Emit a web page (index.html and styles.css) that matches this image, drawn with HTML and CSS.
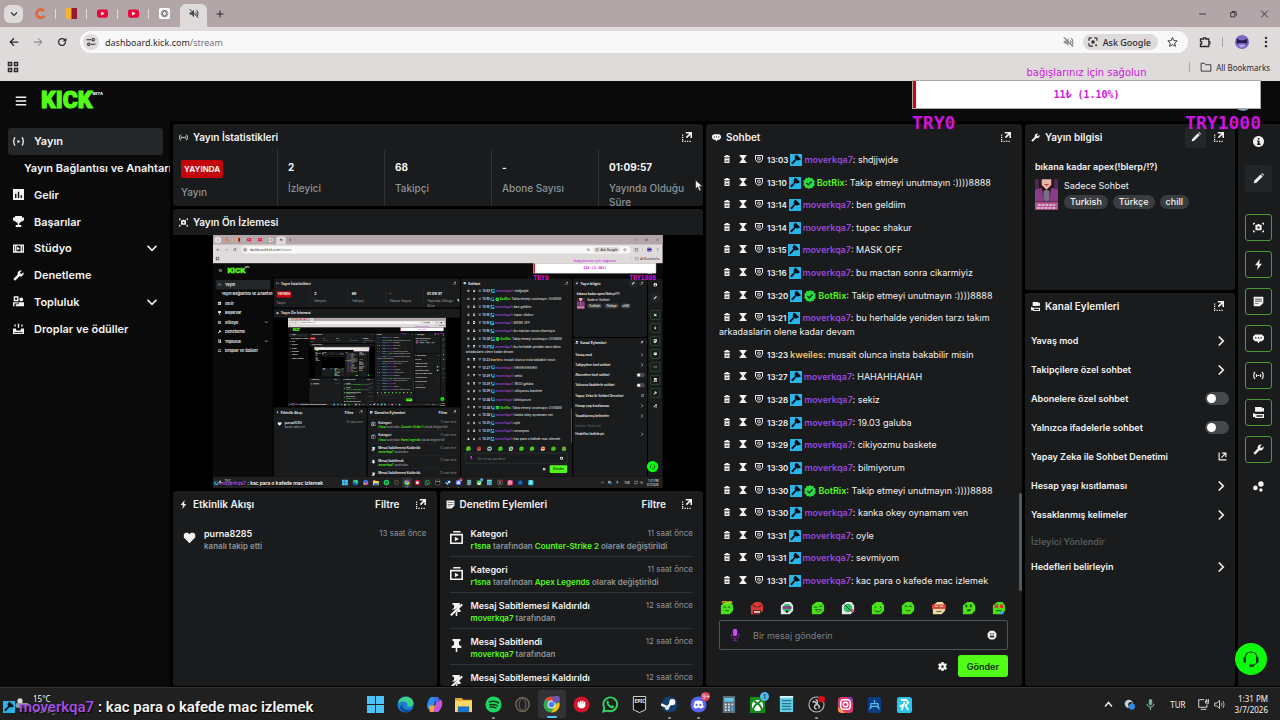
FILE: index.html
```html
<!DOCTYPE html>
<html lang="tr">
<head>
  <meta charset="UTF-8">
  <meta name="viewport" content="width=device-width, initial-scale=1.0">
  <title>Kick - Yayın</title>
  <link rel="stylesheet" href="styles.css">
</head>
<body>
  <svg class="sprite" aria-hidden="true">
    <symbol id="i-down" viewBox="0 0 16 16"><path d="M2 5l6 6 6-6" fill="none" stroke="currentColor" stroke-width="2.200"/></symbol>
    <symbol id="i-right" viewBox="0 0 16 16"><path d="M5 2l6 6-6 6" fill="none" stroke="currentColor" stroke-width="2.200"/></symbol>
    <symbol id="i-back" viewBox="0 0 16 16"><path d="M15 8H2M8 2L2 8l6 6" fill="none" stroke="currentColor" stroke-width="2"/></symbol>
    <symbol id="i-forward" viewBox="0 0 16 16"><path d="M1 8h13M8 2l6 6-6 6" fill="none" stroke="currentColor" stroke-width="1.500"/></symbol>
    <symbol id="i-reload" viewBox="0 0 16 16"><path d="M13.500 8a5.500 5.500 0 1 1-1.600-3.900L14 6" fill="none" stroke="currentColor" stroke-width="2"/><path d="M15 1v6H9z"/></symbol>
    <symbol id="i-tune" viewBox="0 0 16 16"><g fill="none" stroke="currentColor" stroke-width="1.700"><path d="M1 4.500h7M8 11.500h7"/><circle cx="11.500" cy="4.500" r="2"/><circle cx="4.500" cy="11.500" r="2"/></g></symbol>
    <symbol id="i-muted" viewBox="0 0 16 16"><path d="M1 6h3l4-4v12l-4-4H1z" opacity=".8"/><path d="M1 1l14 14M10.500 5.500c1.500 1.500 1.500 3.500 0 5M12 2.500c3 2.500 3 7.500 1 10" fill="none" stroke="currentColor" stroke-width="1.500"/></symbol>
    <symbol id="i-plus" viewBox="0 0 16 16"><path d="M8 1v14M1 8h14" fill="none" stroke="currentColor" stroke-width="2.200"/></symbol>
    <symbol id="i-lens" viewBox="0 0 16 16"><path d="M1.500 6V3.500a2 2 0 0 1 2-2H6M10 1.500h2.500a2 2 0 0 1 2 2V6M1.500 10v2.500a2 2 0 0 0 2 2H8" fill="none" stroke="currentColor" stroke-width="2"/><circle cx="8" cy="8" r="2.700"/><circle cx="13" cy="13" r="1.600"/></symbol>
    <symbol id="i-star" viewBox="0 0 16 16"><path d="M8 1.500l2 4.500 4.800.4-3.600 3.200 1.100 4.700L8 11.800l-4.300 2.500 1.100-4.700L1.200 6.400 6 6z" fill="none" stroke="currentColor" stroke-width="1.300"/></symbol>
    <symbol id="i-ext" viewBox="0 0 16 16"><path d="M2 4h4V2.500h3V4h4v4h1.500v2.500H13V14H2v-3.500h1.500v-3H2z" fill="none" stroke="currentColor" stroke-width="1.700"/></symbol>
    <symbol id="i-dots" viewBox="0 0 16 16"><circle cx="8" cy="2.500" r="1.600"/><circle cx="8" cy="8" r="1.600"/><circle cx="8" cy="13.500" r="1.600"/></symbol>
    <symbol id="i-apps" viewBox="0 0 16 16"><path d="M2 2h4v4H2zM10 2h4v4h-4zM2 10h4v4H2zM10 10h4v4h-4z" fill="none" stroke="currentColor" stroke-width="2"/></symbol>
    <symbol id="i-folder" viewBox="0 0 16 16"><path d="M1.500 3h4.500l1.500 2h7v8.500h-13z" fill="none" stroke="currentColor" stroke-width="1.200"/></symbol>
    <symbol id="i-min" viewBox="0 0 16 16"><path d="M2 8h12" stroke="currentColor" stroke-width="1.500"/></symbol>
    <symbol id="i-max" viewBox="0 0 16 16"><path d="M5 3.500h6.500a1.500 1.500 0 0 1 1.500 1.500v6M3 5.500h7.500V13H3z" fill="none" stroke="currentColor" stroke-width="1.500"/></symbol>
    <symbol id="i-close" viewBox="0 0 16 16"><path d="M2 2l12 12M14 2L2 14" stroke="currentColor" stroke-width="1.600"/></symbol>
    <symbol id="i-menu" viewBox="0 0 16 16"><path d="M1 3h14M1 8h14M1 13h14" stroke="currentColor" stroke-width="1.800"/></symbol>
    <symbol id="i-live" viewBox="0 0 16 16"><path d="M3 2C.5 4 .5 12 3 14M13 2c2.500 2 2.500 10 0 12" fill="none" stroke="currentColor" stroke-width="1.900"/><path d="M6.500 5.500l4 2.500-4 2.500z"/></symbol>
    <symbol id="i-signal" viewBox="0 0 16 16"><path d="M3 3C.5 5 .5 11 3 13M5 6v4M13 3c2.500 2 2.500 8 0 10M11 6v4M6.500 8h3" fill="none" stroke="currentColor" stroke-width="1.700"/></symbol>
    <symbol id="i-bars" viewBox="0 0 16 16"><path fill-rule="evenodd" d="M0 0h16v16H0zM3 7v6h2V7zM7 4v9h2V4zM11 9v4h2V9z"/></symbol>
    <symbol id="i-cup" viewBox="0 0 16 16"><path d="M3 0h10v2h3v4l-3 2h-1l-3 3v2h3v3H4v-3h3v-2L4 8H3L0 6V2h3z"/></symbol>
    <symbol id="i-studio" viewBox="0 0 16 16"><path fill-rule="evenodd" d="M0 2h16v12H0zM2 4v8h1V4zM5 4v8h6V4zM13 4v8h1V4z"/><path d="M6 5l4 3-4 3z"/></symbol>
    <symbol id="i-wrench" viewBox="0 0 24 24"><path transform="matrix(-1 0 0 1 24 0)" d="M22.700 19l-9.100-9.100c.9-2.300.4-5-1.500-6.900-2-2-5-2.400-7.400-1.300L9 6 6 9 1.600 4.700C.4 7.100.9 10.100 2.900 12.100c1.900 1.900 4.600 2.400 6.900 1.500l9.100 9.100c.4.4 1 .4 1.400 0l2.300-2.300c.5-.4.5-1.100.1-1.400z"/></symbol>
    <symbol id="i-people" viewBox="0 0 16 16"><path d="M2 1.500h5v5H2zM1 15v-5h6" fill="none" stroke="currentColor" stroke-width="2"/><circle cx="12" cy="5" r="2.800"/><path d="M8 9h8v6H4v-3h4z"/></symbol>
    <symbol id="i-drops" viewBox="0 0 16 16"><path fill-rule="evenodd" d="M0 8h4l1 3h6l1-3h4v8H0zM2 13v1h12v-1zM7 1h2v6H7zM2 2h2v3H2zM12 2h2v3h-2z"/></symbol>
    <symbol id="i-popout" viewBox="0 0 16 16"><path d="M6 0h10v9.500h-2.500V4.300L8 10 6 8l5.700-5.500H6zM0 4h2v2H0zM0 7.500h2v2H0zM0 11h2v2H0zM0 14h2v2H0zM4 14h2v2H4zM8 14h2v2H8zM12 14h2v2h-2z"/></symbol>
    <symbol id="i-link" viewBox="0 0 16 16"><path d="M2 1v13h13M7 2h7v7M14 2l-8 8" fill="none" stroke="currentColor" stroke-width="2"/></symbol>
    <symbol id="i-target" viewBox="0 0 16 16"><path d="M0 1h3v1.500H1.500V4H0zM13 1h3v3h-1.500V2.500H13zM0 12h1.500v1.500H3V15H0zM14.500 12H16v3h-3v-1.500h1.500z"/><path fill-rule="evenodd" d="M3.500 4H6l1-1h2l1 1h2.500v8h-9zM6.500 6.500v3h3v-3z"/></symbol>
    <symbol id="i-bolt" viewBox="0 0 16 16"><path d="M10 0L3 9h4l-1 7 7-9H9z"/></symbol>
    <symbol id="i-note" viewBox="0 0 16 16"><path fill-rule="evenodd" d="M1 1h14v9l-5 5H1zM3 4v1h10V4zM3 7v1h10V7zM3 10v1h5v-1z"/></symbol>
    <symbol id="i-chat" viewBox="0 0 16 16"><path fill-rule="evenodd" d="M3 2h10l3 3v4l-3 3h-3l-2 3-2-3H3L0 9V5zM3 6v2h2V6zM7 6v2h2V6zM11 6v2h2V6z"/></symbol>
    <symbol id="i-cams" viewBox="0 0 16 16"><path d="M3 0h10v2l3-1v6l-3-1v1H3z"/><path fill-rule="evenodd" d="M0 9h2l1 1h13v6H3v-2l-3 1zM5 12v2h9v-2z"/></symbol>
    <symbol id="i-pen" viewBox="0 0 16 16"><path d="M11 2l3 3L5 14l-4 1 1-4zM12 1l1-1 3 3-1 1z"/></symbol>
    <symbol id="i-info" viewBox="0 0 16 16"><path fill-rule="evenodd" d="M8 0a8 8 0 1 0 .01 0zM7 3h2.500v2.200H7zM6 6.500h3.500V11H11v2H6v-2h1V8.500H6z"/></symbol>
    <symbol id="i-nodes" viewBox="0 0 16 16"><circle cx="3.500" cy="10" r="3.300"/><circle cx="11.500" cy="4.500" r="4"/><circle cx="11.500" cy="13" r="2.500"/></symbol>
    <symbol id="i-trash" viewBox="0 0 16 16"><path d="M5 0h6v2h3v2H2V2h3z"/><path fill-rule="evenodd" d="M3 5h10v11H3zM5 7v1h6V7zM5 10v1h6v-1zM5 13v1h6v-1z"/></symbol>
    <symbol id="i-glass" viewBox="0 0 16 16"><path d="M1 0h14v2.500H1zM1 13.500h14V16H1zM3 2h10v2L9.500 8l3.500 4v2H3v-2l3.500-4L3 4z"/></symbol>
    <symbol id="i-ban" viewBox="0 0 16 16"><path d="M1 1h14v8l-4 5H5L1 9z" fill="none" stroke="currentColor" stroke-width="2"/><circle cx="8" cy="7" r="3" fill="none" stroke="currentColor" stroke-width="1.500"/><path d="M6 5l4 4" stroke="currentColor" stroke-width="1.500"/></symbol>
    <symbol id="i-mod" viewBox="0 0 16 16"><path fill="#27b5ea" d="M0 0h16v16H0z"/><path fill="#081018" d="M7 2l2-1 5 5v2h-2l-1.500 1L9 7.500 3.500 14 1.500 12 7 6.500 6 5z"/></symbol>
    <symbol id="i-check" viewBox="0 0 16 16"><path fill="#2bdc3c" d="M8 0l2 1.500 2.500-.5.700 2.500L15.600 5 15 8l.6 3-2.400 1.500-.7 2.500-2.500-.5L8 16l-2-1.500-2.500.5-.7-2.500L.4 11 1 8 .4 5l2.400-1.500L3.500 1l2.500.5z"/><path d="M4.500 8l2.500 2.500L11.500 6" fill="none" stroke="#123" stroke-width="1.700"/></symbol>
    <symbol id="i-heart" viewBox="0 0 16 16"><path d="M8 15L1 8V4l2-2h3l2 2 2-2h3l2 2v4z"/></symbol>
    <symbol id="i-category" viewBox="0 0 16 16"><path d="M4 0h9v1.800H4z"/><path fill-rule="evenodd" d="M0 3.500h16V16H0zM2 5.500V14h12V5.500z"/><path d="M6 7l5 2.700-5 2.800z"/></symbol>
    <symbol id="i-pin" viewBox="0 0 16 16"><path d="M3 0h10v2l-2 1v4l3 2v2H9v5H7v-5H2V9l3-2V3L3 2z"/></symbol>
    <symbol id="i-unpin" viewBox="0 0 16 16"><path d="M3 0h9v3l-6 5H2l3-2V2H3zM14 1l2 1.500L2 16l-2-1.500zM11 7l2 2v2H9v5H7v-4z"/></symbol>
    <symbol id="i-mic" viewBox="0 0 16 20"><rect x="4.500" y="0" width="7" height="12" rx="3.500" fill="#d14cf0"/><path d="M2 8v3c0 6 12 6 12 0V8M8 15v4M5 19h6" fill="none" stroke="#8a1fae" stroke-width="1.600"/></symbol>
    <symbol id="i-smile" viewBox="0 0 16 16"><path fill-rule="evenodd" d="M5 1h6l4 4v6l-4 4H5l-4-4V5zM5 5v2h2V5zM9 5v2h2V5zM4 9v1l2 2h4l2-2V9z"/></symbol>
    <symbol id="i-gear" viewBox="0 0 16 16"><path fill-rule="evenodd" d="M6 0h4v2l2 1 2-1 2 3.500L14 7v2l2 1.500L14 14l-2-1-2 1v2H6v-2l-2-1-2 1-2-3.500L2 9V7L0 5.500 2 2l2 1 2-1zM6 6v4h4V6z"/></symbol>
    <symbol id="i-support" viewBox="0 0 16 16"><path d="M2 9V7c0-8 12-8 12 0v3c0 3-3 4.500-6 4.500" fill="none" stroke="#052b05" stroke-width="1.200"/><path fill="#052b05" d="M.5 6.500h2.500v5H.5zM13 6.500h2.500v5H13zM6.500 13.500h4V16h-4z"/></symbol>
  </svg>

  <div class="desktop" id="desktop">
    <header class="browser">
      <div class="tabstrip">
        <button class="tab-search" aria-label="Sekme ara"><svg><use href="#i-down"/></svg></button>
        <button class="tab" aria-label="Crunchy"><svg viewBox="0 0 16 16"><path d="M13 4.500A6 6 0 1 0 13.500 11" fill="none" stroke="#e2683a" stroke-width="4"/></svg></button>
        <button class="tab" aria-label="Galatasaray"><svg viewBox="0 0 16 16"><path fill="#f5b52e" d="M0 0h8v16H0z"/><path fill="#951a32" d="M8 0h8v16H8z"/></svg></button>
        <button class="tab" aria-label="YouTube"><svg viewBox="0 0 16 16"><rect y="2" width="16" height="12" rx="3" fill="#e8063c"/><path fill="#fff" d="M6 5l5 3-5 3z"/></svg></button>
        <button class="tab" aria-label="YouTube"><svg viewBox="0 0 16 16"><rect y="2" width="16" height="12" rx="3" fill="#e8063c"/><path fill="#fff" d="M6 5l5 3-5 3z"/></svg></button>
        <button class="tab last" aria-label="ChatGPT"><svg viewBox="0 0 16 16"><rect width="16" height="16" rx="3" fill="#fff"/><g fill="none" stroke="#666"><ellipse cx="8" cy="8" rx="5.500" ry="2.800"/><ellipse cx="8" cy="8" rx="5.500" ry="2.800" transform="rotate(60 8 8)"/><ellipse cx="8" cy="8" rx="5.500" ry="2.800" transform="rotate(120 8 8)"/></g></svg></button>
        <button class="tab active" aria-label="Kick"><svg><use href="#i-muted"/></svg></button>
        <button class="tab-new" aria-label="Yeni sekme"><svg><use href="#i-plus"/></svg></button>
        <div class="window-buttons">
          <button aria-label="Küçült"><svg><use href="#i-min"/></svg></button>
          <button aria-label="Ekranı kapla"><svg><use href="#i-max"/></svg></button>
          <button aria-label="Kapat"><svg><use href="#i-close"/></svg></button>
        </div>
      </div>
      <div class="toolbar">
        <div class="nav-buttons">
          <button aria-label="Geri"><svg><use href="#i-back"/></svg></button>
          <button class="dim" aria-label="İleri"><svg><use href="#i-forward"/></svg></button>
          <button aria-label="Yenile"><svg><use href="#i-reload"/></svg></button>
        </div>
        <div class="address">
          <button class="site-info" aria-label="Site bilgisi"><svg><use href="#i-tune"/></svg></button>
          <span class="url">dashboard.kick.com<span>/stream</span></span>
          <svg class="dim"><use href="#i-muted"/></svg>
          <button class="ask"><svg><use href="#i-lens"/></svg>Ask Google</button>
          <svg><use href="#i-star"/></svg>
        </div>
        <div class="tool-buttons">
          <button aria-label="Uzantılar"><svg><use href="#i-ext"/></svg></button>
          <span class="sep"></span>
          <button aria-label="Profil"><svg class="profile" viewBox="0 0 16 16"><circle cx="8" cy="8" r="8" fill="#7b69c6"/><path fill="#241c52" d="M2 4l4 2h4l4-2v6l-4-1H6l-4 1z"/><path fill="#b7a8ee" d="M4 11h8l-2 3H6z"/></svg></button>
          <button aria-label="Menü"><svg><use href="#i-dots"/></svg></button>
        </div>
      </div>
      <div class="bookmarks">
        <button aria-label="Uygulamalar"><svg><use href="#i-apps"/></svg></button>
        <span class="sep"></span>
        <a href="#"><svg><use href="#i-folder"/></svg>All Bookmarks</a>
      </div>
    </header>

    <div class="page">
      <aside class="sidebar">
        <div class="brand">
          <button aria-label="Menü"><svg><use href="#i-menu"/></svg></button>
          <a class="logo" href="#">KICK</a><sup>BETA</sup>
        </div>
        <nav>
          <a class="current" href="#"><svg><use href="#i-live"/></svg>Yayın</a>
          <a class="sub" href="#">Yayın Bağlantısı ve Anahtarı</a>
          <a href="#"><svg><use href="#i-bars"/></svg>Gelir</a>
          <a href="#"><svg><use href="#i-cup"/></svg>Başarılar</a>
          <a href="#"><svg><use href="#i-studio"/></svg>Stüdyo<svg class="more"><use href="#i-down"/></svg></a>
          <a href="#"><svg><use href="#i-wrench"/></svg>Denetleme</a>
          <a href="#"><svg><use href="#i-people"/></svg>Topluluk<svg class="more"><use href="#i-down"/></svg></a>
          <a href="#"><svg><use href="#i-drops"/></svg>Droplar ve ödüller</a>
        </nav>
      </aside>

      <main>
        <div class="topbar"><button class="account" aria-label="Hesap"></button></div>
        <div class="panels">
          <div class="col left">
            <section class="card stats-card">
              <div class="card-head"><svg><use href="#i-signal"/></svg><h2>Yayın İstatistikleri</h2><button aria-label="Ayrı pencere"><svg><use href="#i-popout"/></svg></button></div>
              <div class="stats">
                <div><b class="on-air">YAYINDA</b><span>Yayın</span></div>
                <div><b>2</b><span>İzleyici</span></div>
                <div><b>68</b><span>Takipçi</span></div>
                <div><b>-</b><span>Abone Sayısı</span></div>
                <div><b>01:09:57</b><span>Yayında Olduğu Süre</span></div>
              </div>
            </section>
            <section class="card preview">
              <div class="card-head"><svg><use href="#i-target"/></svg><h2>Yayın Ön İzlemesi</h2></div>
              <div class="stage"><div class="screen"></div></div>
            </section>
            <div class="feeds">
              <section class="card">
                <div class="card-head"><svg><use href="#i-bolt"/></svg><h2>Etkinlik Akışı</h2><button class="filter">Filtre</button><button aria-label="Ayrı pencere"><svg><use href="#i-popout"/></svg></button></div>
                <ul class="feed">
                  <li><svg><use href="#i-heart"/></svg><p><b>purna8285</b>kanalı takip etti</p><time>13 saat önce</time></li>
                </ul>
              </section>
              <section class="card">
                <div class="card-head"><svg><use href="#i-note"/></svg><h2>Denetim Eylemleri</h2><button class="filter">Filtre</button><button aria-label="Ayrı pencere"><svg><use href="#i-popout"/></svg></button></div>
                <ul class="feed lined">
                  <li><svg><use href="#i-category"/></svg><p><b>Kategori</b><em>r1sna</em> tarafından <em>Counter-Strike 2</em> olarak değiştirildi</p><time>11 saat önce</time></li>
                  <li><svg><use href="#i-category"/></svg><p><b>Kategori</b><em>r1sna</em> tarafından <em>Apex Legends</em> olarak değiştirildi</p><time>11 saat önce</time></li>
                  <li><svg><use href="#i-unpin"/></svg><p><b>Mesaj Sabitlemesi Kaldırıldı</b><em>moverkqa7</em> tarafından</p><time>12 saat önce</time></li>
                  <li><svg><use href="#i-pin"/></svg><p><b>Mesaj Sabitlendi</b><em>moverkqa7</em> tarafından</p><time>12 saat önce</time></li>
                  <li><svg><use href="#i-unpin"/></svg><p><b>Mesaj Sabitlemesi Kaldırıldı</b></p><time>12 saat önce</time></li>
                </ul>
              </section>
            </div>
          </div>

          <section class="card chat">
            <div class="card-head"><svg><use href="#i-chat"/></svg><h2>Sohbet</h2><button aria-label="Ayrı pencere"><svg><use href="#i-popout"/></svg></button></div>
            <ol class="messages"></ol>
            <span class="thumb"></span>
            <div class="emotes"></div>
            <div class="message-box">
              <svg><use href="#i-mic"/></svg>
              <input type="text" placeholder="Bir mesaj gönderin" aria-label="Bir mesaj gönderin">
              <button aria-label="İfadeler"><svg><use href="#i-smile"/></svg></button>
            </div>
            <div class="send-row">
              <button aria-label="Ayarlar"><svg><use href="#i-gear"/></svg></button>
              <button class="send">Gönder</button>
            </div>
          </section>

          <div class="col right">
            <section class="card">
              <div class="card-head"><svg><use href="#i-wrench"/></svg><h2>Yayın bilgisi</h2><button class="edit" aria-label="Düzenle"><svg><use href="#i-pen"/></svg></button><button aria-label="Ayrı pencere"><svg><use href="#i-popout"/></svg></button></div>
              <div class="info">
                <h3>bıkana kadar apex(!blerp/!?)</h3>
                <div class="category">
                  <svg viewBox="0 0 24 32"><path fill="#4d2b52" d="M0 0h24v32H0z"/><path fill="#2a1520" d="M4 0h16v12H4z"/><path fill="#e7b7a6" d="M7 0h10v6l-5 5-5-5z"/><path fill="#c03a50" d="M9 5h6l-3 2z"/><path fill="#8c3c86" d="M0 11l7-2 2 14H0zM24 11l-7-2-2 14h9z"/><rect x="9" y="11" width="6" height="12" rx="3" fill="#777080"/><path fill="#b7578f" d="M0 24h24v8H0z"/><path d="M3 27h18M2 30h20" stroke="#e8cfe2" stroke-width="1.500" stroke-dasharray="3 1"/></svg>
                  <div>
                    <p>Sadece Sohbet</p>
                    <span class="tag">Turkish</span><span class="tag">Türkçe</span><span class="tag">chill</span>
                  </div>
                </div>
              </div>
            </section>
            <section class="card">
              <div class="card-head"><svg><use href="#i-cams"/></svg><h2>Kanal Eylemleri</h2><button aria-label="Ayrı pencere"><svg><use href="#i-popout"/></svg></button></div>
              <div class="actions">
                <a href="#">Yavaş mod<svg><use href="#i-right"/></svg></a>
                <a href="#">Takipçilere özel sohbet<svg><use href="#i-right"/></svg></a>
                <label>Abonelere özel sohbet<input type="checkbox"></label>
                <label>Yalnızca ifadelerle sohbet<input type="checkbox"></label>
                <a href="#">Yapay Zeka ile Sohbet Denetimi<svg class="ext"><use href="#i-link"/></svg></a>
                <a href="#">Hesap yaşı kısıtlaması<svg><use href="#i-right"/></svg></a>
                <a href="#">Yasaklanmış kelimeler<svg><use href="#i-right"/></svg></a>
                <a class="short off" href="#">İzleyici Yönlendir</a>
                <a class="short" href="#">Hedefleri belirleyin<svg><use href="#i-right"/></svg></a>
              </div>
            </section>
          </div>

          <div class="rail">
            <button aria-label="Bilgi"><svg><use href="#i-info"/></svg></button>
            <button class="filled" aria-label="Düzenle"><svg><use href="#i-pen"/></svg></button>
            <button class="on first" aria-label="Ön izleme"><svg><use href="#i-target"/></svg></button>
            <button class="on" aria-label="Etkinlik"><svg><use href="#i-bolt"/></svg></button>
            <button class="on" aria-label="Denetim"><svg><use href="#i-note"/></svg></button>
            <button class="on" aria-label="Sohbet"><svg><use href="#i-chat"/></svg></button>
            <button class="on" aria-label="İstatistik"><svg><use href="#i-signal"/></svg></button>
            <button class="on" aria-label="Eylemler"><svg><use href="#i-cams"/></svg></button>
            <button class="on" aria-label="Yayın bilgisi"><svg><use href="#i-wrench"/></svg></button>
            <button aria-label="Bağlantılar"><svg><use href="#i-nodes"/></svg></button>
          </div>
        </div>
      </main>
      <button class="support" aria-label="Destek"><svg><use href="#i-support"/></svg></button>
    </div>

    <div class="goal">
      <p class="goal-title">bağışlarınız için sağolun</p>
      <div class="goal-bar"><span class="goal-fill"></span>11₺ (1.10%)</div>
      <div class="goal-ends"><span>TRY0</span><span>TRY1000</span></div>
    </div>

    <svg class="pointer" viewBox="0 0 12 18"><path d="M1 1v13l3-3 2.500 6 2.500-1-2.500-5.500H11z" fill="#fff" stroke="#222" stroke-width=".8"/></svg>

    <footer class="taskbar">
      <div class="weather">
        <svg viewBox="0 0 24 16"><circle cx="9" cy="5" r="4" fill="#d8d8d8"/><rect x="2" y="8" width="20" height="7" rx="3" fill="#8f9aa6"/></svg>
        <p>15°C<br><span>Sunny</span></p>
        <div class="now-chat"><svg><use href="#i-mod"/></svg><p><b>moverkqa7</b> : kac para o kafede mac izlemek</p></div>
      </div>
      <div class="apps">
        <button aria-label="Başlat"><svg viewBox="0 0 18 18"><path fill="#4cc2f5" d="M0 0h8.500v8.500H0zM9.500 0H18v8.500H9.500zM0 9.500h8.500V18H0zM9.500 9.500H18V18H9.500z"/></svg></button>
        <button aria-label="Edge"><svg viewBox="0 0 18 18"><circle cx="9" cy="9" r="8.500" fill="#1a7fd0"/><path fill="#3fd08c" d="M1 8c1-9 15-10 16.500-1 .5 4-4 5-7 4 3-5-5-7-9.500-3z"/><path fill="#0c4a94" d="M6 9c-1 5 4 7 9 5-3 5-11 4-12-2z"/></svg></button>
        <button aria-label="Copilot"><svg viewBox="0 0 18 18"><path fill="#2c8df0" d="M5 1h6l-4 13H2C0 10 2 4 5 1z"/><path fill="#f3a43c" d="M3 10h7l-2 7H4z"/><path fill="#c555d8" d="M11 4h5c3 4 0 10-3 13H8z"/><path fill="#4668e8" d="M8 1h5l2 5h-5z"/></svg></button>
        <button aria-label="Dosya Gezgini"><svg viewBox="0 0 18 18"><path fill="#e8a92a" d="M0 2h7l2 2h9v5H0z"/><path fill="#ffd766" d="M0 5h18v12H0z"/><path fill="#1b76c8" d="M3 11h12v6H3z"/></svg></button>
        <button class="open" aria-label="Spotify"><svg viewBox="0 0 18 18"><circle cx="9" cy="9" r="8.500" fill="#1ed760"/><path d="M4 6.500c4-1.500 8-1 11 1M4.500 9.500c3-1 6.500-.5 9 1M5 12c3-.8 5-.4 7 .8" fill="none" stroke="#10301b" stroke-width="1.600"/></svg></button>
        <button aria-label="Opera"><svg viewBox="0 0 18 18"><ellipse cx="9" cy="9" rx="7" ry="7.500" fill="#222" stroke="#6c6653" stroke-width="1.600"/><ellipse cx="9" cy="9" rx="3.500" ry="6" fill="none" stroke="#77705c"/></svg></button>
        <button class="open now" aria-label="Chrome"><svg viewBox="0 0 18 18"><circle cx="9" cy="9" r="8.500" fill="#33a852"/><path fill="#ea4335" d="M2 4c4-5 12-4 15 2H9z"/><path fill="#fbbc05" d="M17 6c2 6-2 11-8 11.500L13 10z"/><circle cx="9" cy="9" r="4.200" fill="#fff"/><circle cx="9" cy="9" r="3.200" fill="#4285f4"/><circle cx="14" cy="3.500" r="4" fill="#6a57ae"/></svg></button>
        <button aria-label="Riot"><svg viewBox="0 0 18 18"><circle cx="9" cy="9" r="8.500" fill="#d5122c"/><path fill="#fff" d="M5 7l1-1h1v2h.5V5h1.500v3h.5V5H11v3h.5V6H13v5l-2 2H7.500L5 11z"/></svg></button>
        <button aria-label="WhatsApp"><svg viewBox="0 0 18 18"><path d="M1.500 16.500l1-4A7.300 7.300 0 1 1 6 15.500z" fill="none" stroke="#34d366" stroke-width="2"/><path fill="#34d366" d="M6 4.500l1.500 2-.7 1.500 2.700 2.500 1.500-.8 2 1.300c-1 3-4 2-6 0S4 6 6 4.500z"/></svg></button>
        <button aria-label="Epic Games"><svg viewBox="0 0 18 18"><path fill="#111" stroke="#ddd" d="M2.500.5h13v14L9 17.500l-6.500-3z"/></svg><small>EPIC</small></button>
        <button class="open" aria-label="Steam"><svg viewBox="0 0 18 18"><circle cx="9" cy="9" r="8.500" fill="#123f70"/><path d="M0 9l7 3 4-5" fill="none" stroke="#fff" stroke-width="2.600"/><circle cx="12" cy="6.500" r="3.200" fill="#fff"/><circle cx="6.500" cy="12.500" r="2.300" fill="#dfe8f2"/></svg></button>
        <button class="open" aria-label="Discord"><svg viewBox="0 0 18 18"><circle cx="9" cy="9" r="8.500" fill="#5865f2"/><path fill="#fff" d="M5 5.500c3-1 5-1 8 0l1.500 6.500-3 1.500-.7-1H7.200l-.7 1-3-1.500z"/><circle cx="7" cy="9.500" r="1.200" fill="#5865f2"/><circle cx="11" cy="9.500" r="1.200" fill="#5865f2"/></svg><i class="badge red">9+</i></button>
        <button aria-label="Hesap Makinesi"><svg viewBox="0 0 18 18"><path fill="#5f6d7b" d="M3 0h13v18H3z"/><path fill="#62c9ee" d="M4.500 2h10v4h-10z"/><path fill="#d7e3ea" d="M5 8h2v2H5zM8.500 8h2v2h-2zM12 8h2v2h-2zM5 11h2v2H5zM8.500 11h2v2h-2zM5 14h2v2H5zM8.500 14h2v2h-2z"/><path fill="#41a8dd" d="M12 11h2v5h-2z"/></svg></button>
        <button aria-label="Xbox"><svg viewBox="0 0 18 18"><path fill="#168a1d" d="M1 1h16v17H1z"/><circle cx="9" cy="10" r="6" fill="#fff"/><path d="M4 15C6 9 9 8 9 8s3 1 5 7M5 5l4 3 4-3" fill="none" stroke="#168a1d" stroke-width="2"/></svg><i class="badge blue">1</i></button>
        <button aria-label="Not Defteri"><svg viewBox="0 0 18 18"><path fill="#64d0e4" d="M2 1h14v16H2z"/><path d="M4 5h10M4 8h10M4 11h10M4 14h10" stroke="#23748c" stroke-width="1.300"/><path fill="#d4f3fa" d="M2 0h14v2H2z"/></svg></button>
        <button class="open" aria-label="OBS"><svg viewBox="0 0 18 18"><circle cx="9" cy="9" r="8" fill="#1b1b1d" stroke="#bbb" stroke-width="1.200"/><path d="M9 9c0-3-3-4-4-2M9 9c3 0 4 3 2 4M9 9c-3 1-3 4 0 5M9 9c2-2 1-5-1-5" fill="none" stroke="#ccc" stroke-width="1.500"/><circle cx="14.500" cy="3.500" r="3.500" fill="#e00c14"/></svg></button>
        <button aria-label="Instagram"><svg viewBox="0 0 18 18"><rect x="1" y="1" width="16" height="17" rx="4" fill="#e03a70"/><path fill="#f8a13a" d="M1 12l8 6H5c-3 0-4-2-4-6z"/><path fill="#8b3ac8" d="M10 1h3c3 0 4 2 4 6z"/><rect x="4" y="4" width="10" height="10" rx="3" fill="none" stroke="#fff" stroke-width="1.500"/><circle cx="9" cy="9" r="2.400" fill="none" stroke="#fff" stroke-width="1.500"/></svg></button>
        <button aria-label="Oyun"><svg viewBox="0 0 18 18"><rect x="2" y="1" width="14" height="17" rx="2" fill="#0d3d80"/><path d="M4.500 13l1-5h7l1 5-2-2h-5zM9 8V4" fill="none" stroke="#58b8f0" stroke-width="1.300"/></svg></button>
        <button aria-label="Kısayol"><svg viewBox="0 0 18 18"><rect x="1" y="1" width="16" height="17" rx="3" fill="#2cc3ea"/><path d="M5 4h6l2 3-3 3 3 5M9 6l-3 9M4 11l4-2" fill="none" stroke="#fff" stroke-width="1.800"/></svg></button>
      </div>
      <div class="tray">
        <svg viewBox="0 0 16 16"><path d="M3 11l5-6 5 6" fill="none" stroke="#eee" stroke-width="2"/></svg>
        <svg viewBox="0 0 16 16"><circle cx="7" cy="7" r="6" fill="#c8d2da"/><path fill="#222" d="M6 8a4 4 0 0 1 6-3v8H7z"/><circle cx="11.500" cy="11" r="4.500" fill="#2b8be8"/></svg>
        <svg viewBox="0 0 16 16"><rect x="5.500" y="0" width="5" height="9" rx="2.500" fill="#6fb3a8"/><path d="M3 7c0 6 10 6 10 0M8 12v4" fill="none" stroke="#9cc" stroke-width="1.400"/></svg>
        <span class="lang">TUR</span>
        <svg class="net" viewBox="0 0 16 16"><path d="M9 1H1v11h12V8M4 15h8M12 0v4M15 0v4M11 3h5v3h-5z" fill="none" stroke="#ddd" stroke-width="1.400"/></svg>
        <svg viewBox="0 0 16 16"><path d="M1 6h3l4-4v12l-4-4H1zM10.500 5.500c1 1.500 1 3.500 0 5M13 3c2 3 2 7 0 10" fill="none" stroke="#ddd" stroke-width="1.300"/></svg>
        <p class="clock">1:31 PM<br>3/7/2026</p>
      </div>
    </footer>
  </div>
  <script src="script.js"></script>
</body>
</html>
```
FILE: styles.css
```css
* {
  box-sizing: border-box;
}
html, body {
  height: 100%;
}
body {
  margin: 0;
  overflow: hidden;
  background-color: #000;
  font-family: Inter, "Liberation Sans", sans-serif;
  font-size: 9px;
  color: #f3f3f3;
}
p, h2, h3, ul, ol {
  margin: 0;
  padding: 0;
  list-style: none;
}
a {
  color: inherit;
  text-decoration: none;
}
button {
  display: flex;
  align-items: center;
  justify-content: center;
  padding: 0;
  border: none;
  background: none;
  color: inherit;
  font: inherit;
  cursor: pointer;
}
svg {
  flex: none;
  width: 12px;
  height: 12px;
  fill: currentColor;
}
.sprite {
  position: absolute;
  width: 0;
  height: 0;
}
.desktop {
  position: relative;
  display: flex;
  flex-direction: column;
  height: 100%;
  overflow: hidden;
  background-color: #000;
}

/* browser window */
.browser {
  background-color: #dfdbdb;
  color: #2c2a2b;
  font-family: "Noto Sans", "Open Sans", sans-serif;
}
.tabstrip {
  display: flex;
  align-items: center;
  height: 27px;
  padding-left: 4px;
  background-color: #b3a6a8;
}
.tab-search {
  width: 19px;
  height: 18px;
  margin-right: 2px;
  border-radius: 6px;
  background-color: #dfdbdb;
}
.tab-search svg {
  width: 8px;
}
.tab {
  position: relative;
  width: 31px;
  height: 18px;
}
.tab:not(.last):not(.active)::after {
  content: "";
  position: absolute;
  right: 0;
  top: 4px;
  width: 1px;
  height: 10px;
  background-color: #e2dadb;
}
.tab.active {
  width: 27px;
  height: 23px;
  align-self: flex-end;
  padding-bottom: 4px;
  border-radius: 6px 6px 0 0;
  background-color: #dfdbdb;
}
.tab svg {
  width: 11px;
  height: 11px;
}
.tab.active svg {
  width: 10px;
}
.tab-new {
  width: 26px;
}
.tab-new svg {
  width: 8px;
}
.window-buttons {
  display: flex;
  margin-left: auto;
}
.window-buttons button {
  width: 31px;
}
.window-buttons svg {
  width: 9px;
}
.toolbar {
  display: flex;
  align-items: center;
  height: 30px;
}
.nav-buttons {
  display: flex;
  padding: 0 6px 0 2px;
}
.nav-buttons button {
  width: 24px;
}
.nav-buttons svg {
  width: 10px;
}
.dim {
  opacity: 0.6;
}
.address {
  flex: 1;
  display: flex;
  align-items: center;
  gap: 9px;
  height: 22px;
  padding: 0 10px 0 3px;
  border-radius: 11px;
  background-color: #f9f8f8;
}
.site-info {
  width: 16px;
  height: 16px;
  border-radius: 8px;
  background-color: #dfdbdb;
}
.site-info svg {
  width: 10px;
}
.url {
  flex: 1;
  margin-left: -3px;
}
.url span {
  color: #77737a;
}
.address > svg {
  width: 11px;
}
.ask {
  gap: 5px;
  height: 16px;
  padding: 0 7px 0 5px;
  border-radius: 8px;
  background-color: #dfdbdb;
  font-weight: 500;
}
.ask svg {
  width: 10px;
}
.tool-buttons {
  display: flex;
  align-items: center;
  width: 92px;
  justify-content: space-between;
  padding: 0 8px 0 11px;
}
.profile {
  width: 14px;
  height: 14px;
}
.sep {
  width: 1px;
  height: 10px;
  background-color: #aaa3a5;
}
.bookmarks {
  display: flex;
  align-items: center;
  gap: 10px;
  height: 24px;
  padding: 0 10px 4px 7px;
  font-size: 8px;
}
.bookmarks .sep {
  margin-left: auto;
}
.bookmarks a {
  display: flex;
  align-items: center;
  gap: 4px;
}

/* dashboard */
.page {
  position: relative;
  flex: 1;
  display: flex;
  min-height: 0;
  padding-bottom: 1px;
  border-bottom: 1px solid #333;
}
.sidebar {
  width: 170px;
  margin-bottom: -1px;
  overflow: hidden;
  background-color: #0a0a0b;
}
.brand {
  display: flex;
  align-items: center;
  height: 40px;
  padding-left: 15px;
}
.brand button {
  width: 12px;
  margin-right: 14px;
}
.logo {
  color: #53fc18;
  font-family: Roboto, Inter, sans-serif;
  font-size: 23px;
  font-weight: 900;
  line-height: 22px;
  -webkit-text-stroke: 1px #53fc18;
}
.brand sup {
  align-self: flex-start;
  margin-top: 10px;
  font-size: 4px;
  font-weight: 800;
  line-height: 5px;
}
nav {
  display: grid;
  grid-template-columns: 100%;
  grid-auto-rows: 1fr;
  height: 214px;
  margin-top: 7px;
  padding: 0 7px 0 8px;
}
nav a {
  display: flex;
  align-items: center;
  gap: 10px;
  padding: 0 5px;
  border-radius: 3px;
  font-size: 11px;
  font-weight: 600;
  white-space: nowrap;
}
nav svg {
  width: 11px;
  height: 11px;
}
nav .current {
  background-color: #24272a;
}
nav .sub {
  padding-left: 16px;
}
nav .more {
  width: 12px;
  height: 12px;
  margin-left: auto;
}
main {
  flex: 1;
  display: flex;
  flex-direction: column;
  min-width: 0;
  padding-left: 3px;
}
.topbar {
  height: 43px;
  margin-left: -3px;
  border-bottom: 3px solid #000;
  background-color: #0a0a0b;
}
.account {
  width: 20px;
  height: 20px;
  margin: 10px 27px 0 auto;
  border-radius: 10px;
  background-color: #7fa4bd;
}
.panels {
  flex: 1;
  display: grid;
  grid-template-columns: 530fr 316fr 210fr 42px;
  gap: 3px;
  min-height: 0;
}
.card {
  display: flex;
  flex-direction: column;
  min-width: 0;
  min-height: 0;
  overflow: hidden;
  border-radius: 3px;
  background-color: #191b1c;
}
.card-head {
  flex: none;
  display: flex;
  align-items: center;
  gap: 5px;
  height: 26px;
  padding: 0 11px 0 6px;
}
.card-head > svg {
  width: 9px;
  height: 9px;
}
.card-head h2 {
  flex: 1;
  font-size: 10px;
  font-weight: 600;
  line-height: 14px;
}
.card-head button svg {
  width: 10px;
  height: 10px;
}
.card-head .filter {
  margin-right: 11px;
  font-size: 10px;
  font-weight: 600;
}
.left {
  display: grid;
  grid-template-rows: 82fr 279fr 195fr;
  gap: 3px;
  min-height: 0;
}
.stats {
  flex: 1;
  display: grid;
  grid-template-columns: 104fr 107fr 107fr 107fr 105fr;
  min-height: 0;
  font-size: 10px;
}
.stats div {
  padding: 10px 10px 0;
  border-left: 1px solid #303335;
  color: #8d9499;
  font-weight: 500;
}
.stats div:first-child {
  padding-left: 8px;
  border-left: none;
}
.stats b, .stats span {
  display: block;
  line-height: 14px;
}
.stats b {
  margin-bottom: 7px;
  color: #f5f5f5;
  font-weight: 700;
}
.stats .on-air {
  width: max-content;
  margin-bottom: 7px;
  padding: 2px 3px;
  border-radius: 2px;
  background-color: #c4060c;
  font-size: 8px;
}
.preview {
  background-color: #000;
}
.preview .card-head {
  background-color: #191b1c;
}
.stage {
  flex: 1;
  display: flex;
  justify-content: center;
  min-height: 0;
}
.screen {
  position: relative;
  height: 100%;
  aspect-ratio: 16 / 9;
  overflow: hidden;
}
.screen .desktop {
  transform-origin: 0 0;
}
.feeds {
  display: grid;
  grid-template-columns: 1fr 1fr;
  gap: 3px;
  min-height: 0;
}
.feed {
  padding: 4px 10px 0;
}
.feed li {
  display: flex;
  gap: 8px;
  height: 36px;
  padding-top: 6px;
}
.feed.lined li {
  border-bottom: 1px solid #303335;
}
.feed svg {
  width: 13px;
  height: 13px;
  margin-top: 4px;
}
.feed p {
  flex: 1;
  color: #8d9499;
  font-size: 8px;
  font-weight: 600;
  line-height: 13px;
  white-space: nowrap;
}
.feed b {
  display: block;
  color: #f3f3f3;
  font-size: 9px;
  font-weight: 600;
}
.feed em {
  color: #53fc18;
  font-style: normal;
}
.feed time {
  margin-left: -50px;
  color: #8d9499;
  font-size: 8px;
  line-height: 13px;
  white-space: nowrap;
}

/* chat */
.chat {
  position: relative;
}
.messages {
  flex: 1;
  display: flex;
  flex-direction: column;
  justify-content: space-between;
  min-height: 0;
  padding: 3px 16px 0 13px;
}
.messages li {
  line-height: 14px;
}
.messages svg {
  width: 8px;
  height: 8px;
  margin: 0 4px;
}
.messages .mark {
  width: 12px;
  height: 12px;
  margin: 0 0 0 2px;
  vertical-align: -3px;
}
.messages time {
  font-size: 8px;
  font-weight: 600;
}
.messages b {
  margin-left: 2px;
  font-weight: 600;
}
.mover {
  color: #9747dd;
}
.bot {
  color: #53fc18;
}
.guest {
  color: #f2c55c;
}
.thumb {
  position: absolute;
  right: 0;
  bottom: 95px;
  width: 3px;
  height: 98px;
  border-radius: 2px;
  background-color: #56595b;
}
.emotes {
  display: flex;
  justify-content: space-between;
  padding: 13px 16px 5px 14px;
}
.emotes svg {
  width: 14px;
  height: 14px;
}
.message-box {
  display: flex;
  align-items: center;
  height: 30px;
  margin: 0 14px 0 13px;
  padding: 0 10px;
  border: 1px solid #505456;
  border-radius: 2px;
}
.message-box svg {
  width: 10px;
  height: 14px;
}
.message-box button svg {
  height: 10px;
}
.message-box input {
  flex: 1;
  min-width: 0;
  padding: 0 13px;
  border: none;
  outline: none;
  background: none;
  color: #fff;
  font: inherit;
}
.message-box input::placeholder {
  color: #7b8084;
}
.send-row {
  display: flex;
  justify-content: flex-end;
  gap: 11px;
  padding: 5px 14px 9px;
}
.send-row svg {
  width: 9px;
  height: 9px;
}
.send {
  height: 22px;
  padding: 0 9px;
  border-radius: 3px;
  background-color: #53fc18;
  color: #0d2b06;
  font-weight: 600;
}

/* stream info and channel actions */
.right {
  display: grid;
  grid-template-rows: 166fr 393fr;
  gap: 3px;
  min-height: 0;
}
.card-head .edit {
  width: 21px;
  height: 21px;
  margin-right: 3px;
  border-radius: 3px;
  background-color: #24272a;
}
.info {
  padding: 10px;
}
.info h3 {
  font-size: 9px;
  font-weight: 600;
  line-height: 14px;
}
.category {
  display: flex;
  gap: 6px;
  margin-top: 5px;
}
.category svg {
  width: 23px;
  height: 31px;
}
.category p {
  line-height: 14px;
}
.tag {
  display: inline-block;
  margin: 2px 5px 0 0;
  padding: 0 6px;
  border-radius: 7px;
  background-color: #393d40;
  font-weight: 500;
  line-height: 14px;
}
.actions {
  padding: 7px 8px 0 6px;
}
.actions a, .actions label {
  display: flex;
  align-items: center;
  justify-content: space-between;
  height: 29px;
  font-weight: 600;
}
.actions .short {
  height: 25px;
}
.actions .off {
  color: #55595b;
}
.actions svg {
  width: 12px;
  height: 12px;
}
.actions .ext {
  width: 9px;
  height: 9px;
}
.actions input {
  appearance: none;
  width: 24px;
  height: 13px;
  margin: 0 -2px 0 0;
  padding: 2px;
  border-radius: 7px;
  background-color: #46494b;
}
.actions input::before {
  content: "";
  display: block;
  width: 9px;
  height: 9px;
  border-radius: 5px;
  background-color: #fff;
}
.actions input:checked::before {
  margin-left: auto;
}
.rail {
  display: flex;
  flex-direction: column;
  align-items: center;
  gap: 10px;
  padding: 4px 2px 0 0;
  background-color: #191b1c;
}
.rail button {
  width: 27px;
  height: 27px;
  border-radius: 3px;
}
.rail svg {
  width: 11px;
  height: 11px;
}
.rail .filled {
  background-color: #222527;
}
.rail .on {
  border: 1px solid #4b9a35;
}
.rail .first {
  margin-top: 12px;
}
.support {
  position: absolute;
  right: 13px;
  bottom: 12px;
  width: 32px;
  height: 32px;
  border-radius: 16px;
  background-color: #0cfb0c;
}
.support svg {
  width: 16px;
  height: 16px;
}

/* donation goal shown over the desktop */
.goal {
  position: absolute;
  top: 66px;
  right: 19px;
  width: 349px;
  color: #cf14e0;
  font-family: "DejaVu Sans Mono", monospace;
  font-weight: 700;
}
.goal-title {
  font-family: "DejaVu Sans", sans-serif;
  font-size: 10px;
  font-weight: 400;
  line-height: 14px;
  text-align: center;
}
.goal-bar {
  display: flex;
  align-items: center;
  justify-content: center;
  height: 29px;
  border: 1px solid #aaa;
  background-color: #fff;
  font-size: 10px;
}
.goal-fill {
  position: absolute;
  left: 1px;
  width: 3px;
  height: 27px;
  background-color: #d5000f;
}
.goal-ends {
  display: flex;
  justify-content: space-between;
  font-size: 18px;
  line-height: 27px;
}
.pointer {
  position: absolute;
  top: 179px;
  left: 695px;
  width: 8px;
  height: 13px;
}

/* taskbar */
.taskbar {
  display: grid;
  grid-template-columns: 1fr auto 1fr;
  height: 32px;
  background-color: #202020;
  font-family: "Noto Sans", "Open Sans", sans-serif;
  font-size: 8px;
  line-height: 11px;
}
.weather {
  position: relative;
  display: flex;
  gap: 3px;
  padding: 5px 0 0 14px;
}
.weather > svg {
  width: 16px;
  margin-top: 4px;
}
.weather span {
  color: #999;
}
.now-chat {
  position: absolute;
  top: 9px;
  left: 3px;
  display: flex;
  align-items: center;
  gap: 4px;
  font-family: Roboto, sans-serif;
  font-size: 15px;
  font-weight: 600;
  line-height: 20px;
  white-space: nowrap;
}
.now-chat svg {
  width: 12px;
}
.now-chat p {
  text-shadow: 1px 1px 1px #000;
}
.now-chat b {
  color: #a04fe0;
  font-weight: 600;
}
.apps {
  display: grid;
  grid-template-columns: repeat(19, 1fr);
  width: 558px;
}
.apps button {
  position: relative;
}
.apps svg {
  width: 17px;
  height: 17px;
}
.apps .now {
  margin: 2px 1px;
  border-radius: 3px;
  background-color: #333337;
}
.open::after {
  content: "";
  position: absolute;
  bottom: 1px;
  width: 3px;
  height: 2px;
  border-radius: 1px;
  background-color: #999;
}
.now.open::after {
  width: 10px;
  bottom: 0;
  background-color: #5bc0f5;
}
.apps small {
  position: absolute;
  top: 8px;
  color: #eee;
  font-size: 5px;
  font-weight: 700;
}
.badge {
  position: absolute;
  top: 4px;
  right: 3px;
  min-width: 9px;
  border-radius: 5px;
  font-size: 7px;
  font-style: normal;
  line-height: 9px;
}
.red {
  background-color: #d94452;
}
.blue {
  background-color: #4fb6ee;
  color: #123;
}
.tray {
  display: flex;
  align-items: center;
  justify-content: flex-end;
  gap: 10px;
  padding-right: 12px;
}
.tray svg {
  width: 11px;
  height: 11px;
}
.tray .lang {
  margin: 0 2px 0 4px;
}
.tray .net {
  margin-right: -5px;
}
.clock {
  line-height: 11px;
  text-align: right;
}
```
FILE: script.js
```js
var messages = [
  ['13:03', 'mover', 'shdjjwjde'],
  ['13:10', 'bot', 'Takip etmeyi unutmayın :))))8888'],
  ['13:14', 'mover', 'ben geldiim'],
  ['13:14', 'mover', 'tupac shakur'],
  ['13:15', 'mover', 'MASK OFF'],
  ['13:16', 'mover', 'bu mactan sonra cikarmiyiz'],
  ['13:20', 'bot', 'Takip etmeyi unutmayın :))))8888'],
  ['13:21', 'mover', 'bu herhalde yeniden tarzı takım arkadaslarin olene kadar devam'],
  ['13:23', 'guest', 'musait olunca insta bakabilir misin'],
  ['13:27', 'mover', 'HAHAHHAHAH'],
  ['13:28', 'mover', 'sekiz'],
  ['13:28', 'mover', '19.03 galuba'],
  ['13:29', 'mover', 'cikiyozmu baskete'],
  ['13:30', 'mover', 'bilmiyorum'],
  ['13:30', 'bot', 'Takip etmeyi unutmayın :))))8888'],
  ['13:30', 'mover', 'kanka okey oynamam ven'],
  ['13:31', 'mover', 'oyle'],
  ['13:31', 'mover', 'sevmiyom'],
  ['13:31', 'mover', 'kac para o kafede mac izlemek']
];
var names = { mover: 'moverkqa7', bot: 'BotRix', guest: 'kweiles' };

function icon(id, cls) {
  return '<svg class="' + (cls || '') + '"><use href="#i-' + id + '"/></svg>';
}

document.querySelector('.messages').innerHTML = messages.map(function(m) {
  var marks = m[1] === 'guest' ? '' : icon('mod', 'mark');
  if (m[1] === 'bot') marks += icon('check', 'mark');
  return '<li>' + icon('trash') + icon('glass') + icon('ban') +
    '<time>' + m[0] + '</time>' + marks +
    '<b class="' + m[1] + '">' + names[m[1]] + '</b>: ' + m[2] + '</li>';
}).join('');

// head colour, face details
var emotes = [
  ['#4be01c', '<path d="M4 7h3M9 7h3M6 11h4" stroke="#145208"/><ellipse cx="8" cy="1.500" rx="6" ry="1.200" stroke="#f0c62c" fill="none"/>'],
  ['#d63a34', '<path d="M3 5l4 2M13 5L9 7M4 11h8v3H4z" stroke="#40100e" fill="#f4dada"/>'],
  ['#e6e9ea', '<circle cx="8" cy="8" r="5" fill="#35c06a"/><path d="M3 6h10v3H3z" fill="#8a3a86"/><circle cx="8" cy="12" r="1.500" fill="#222"/>'],
  ['#4be01c', '<path d="M3 7h4M9 6h4M5 10h7l-3 2z" stroke="#145208" fill="#fff"/>'],
  ['#e6e9ea', '<circle cx="8" cy="8" r="5" fill="#35c06a"/><path d="M4 4l8 8" stroke="#222"/><circle cx="13" cy="11" r="2" fill="#e04a86"/>'],
  ['#4be01c', '<path d="M5 6v2M11 6v2M4 10c2 3 6 3 8 0" stroke="#145208" fill="none"/>'],
  ['#4be01c', '<path d="M4 7l2-2 1 2M9 7l2-2 1 2M5 10c2 2 5 2 6 0" stroke="#145208" fill="none"/>'],
  ['#f0d8a0', '<path d="M0 4h16v5H0z" fill="#e0402c"/><path d="M3 6h4M9 6h4" stroke="#fff"/><path d="M5 12h6" stroke="#555"/>'],
  ['#4be01c', '<path d="M5 4v3M10 4v3M6 11l4-1" stroke="#145208" fill="none" stroke-width="2"/>'],
  ['#4be01c', '<path d="M3 4h4v4H3zM9 4h4v4H9z" fill="#e8303c"/><path d="M5 11h6" stroke="#145208"/><path d="M9 12h4v3H9z" fill="#3aa6e8"/>']
];
document.querySelector('.emotes').innerHTML = emotes.map(function(e) {
  return '<svg viewBox="0 0 16 16"><path fill="' + e[0] + '" d="M6 1h6l3 4v6l-4 4H1V5z"/>' + e[1] + '</svg>';
}).join('');

// The preview shows the desktop itself, a few levels deep
var desktop = document.getElementById('desktop');
var screen0 = desktop.querySelector('.screen');
var template = desktop.cloneNode(true);
template.removeAttribute('id');
template.setAttribute('aria-hidden', 'true');
template.inert = true;
var inner = null;
for (var i = 0; i < 3; i++) {
  var copy = template.cloneNode(true);
  if (inner) copy.querySelector('.screen').appendChild(inner);
  inner = copy;
}
screen0.appendChild(inner);

function fitPreview() {
  var scale = screen0.clientHeight / window.innerHeight;
  screen0.querySelectorAll('.desktop').forEach(function(d) {
    d.style.width = window.innerWidth + 'px';
    d.style.height = window.innerHeight + 'px';
    d.style.transform = 'scale(' + scale + ')';
  });
}
fitPreview();
window.addEventListener('resize', fitPreview);
```
